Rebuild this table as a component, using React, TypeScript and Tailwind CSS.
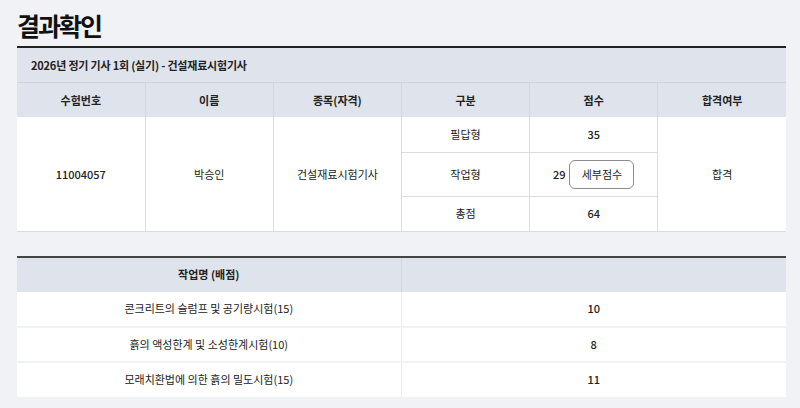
import React from "react";

const font = { fontFamily: '"Noto Sans CJK KR", "Noto Sans", sans-serif' };

export default function App() {
  const tasks = [
    { name: "콘크리트의 슬럼프 및 공기량시험(15)", score: "10" },
    { name: "흙의 액성한계 및 소성한계시험(10)", score: "8" },
    { name: "모래치환법에 의한 흙의 밀도시험(15)", score: "11" },
  ];
  const th = "border-r border-[#d3d7de] last:border-r-0 font-semibold text-center";
  return (
    <div className="w-[800px] h-[408px] bg-[#f1f2f6] text-[#222] overflow-hidden" style={font}>
      <div className="pl-[17px] pr-[14px] pt-[7px]">
        <h1 className="text-[25px] leading-[36px] font-bold text-[#111] mb-[3px] tracking-[-2px]">결과확인</h1>
        <table className="w-[769px] border-collapse table-fixed text-[11px]">
          <thead>
            <tr className="bg-[#dfe3eb] border-t-2 border-[#222]">
              <th colSpan={6} className="h-[35px] text-left pl-[14px] font-semibold border-b border-[#cfd3da] tracking-[-0.2px]">
                2026년 정기 기사 1회 (실기) - 건설재료시험기사
              </th>
            </tr>
            <tr className="bg-[#dfe3eb] h-[35px]">
              <th className={th + " w-[128px]"}>수험번호</th>
              <th className={th + " w-[128px]"}>이름</th>
              <th className={th + " w-[128px]"}>종목(자격)</th>
              <th className={th + " w-[128px]"}>구분</th>
              <th className={th + " w-[128px]"}>점수</th>
              <th className={th}>합격여부</th>
            </tr>
          </thead>
          <tbody className="bg-white">
            <tr className="h-[35px] border-b border-[#dcdcdc]">
              <td rowSpan={3} className="text-center border-r border-[#dcdcdc] font-medium">11004057</td>
              <td rowSpan={3} className="text-center border-r border-[#dcdcdc]">박승인</td>
              <td rowSpan={3} className="text-center border-r border-[#dcdcdc]">건설재료시험기사</td>
              <td className="text-center border-r border-[#dcdcdc]">필답형</td>
              <td className="text-center border-r border-[#dcdcdc] font-medium">35</td>
              <td rowSpan={3} className="text-center">합격</td>
            </tr>
            <tr className="h-[44px] border-b border-[#dcdcdc]">
              <td className="text-center border-r border-[#dcdcdc]">작업형</td>
              <td className="border-r border-[#dcdcdc]">
                <div className="flex items-center justify-center gap-[4px]">
                  <span className="font-medium">29</span>
                  <button className="w-[65px] h-[29px] rounded-[6px] border border-[#8a8a8a] bg-white text-[11px]" style={font}>
                    세부점수
                  </button>
                </div>
              </td>
            </tr>
            <tr className="h-[35px] border-b border-[#dcdcdc]">
              <td className="text-center border-r border-[#dcdcdc]">총점</td>
              <td className="text-center border-r border-[#dcdcdc] font-medium">64</td>
            </tr>
          </tbody>
        </table>

        <table className="w-[769px] border-collapse table-fixed text-[11px] mt-[24px]">
          <thead>
            <tr className="bg-[#dfe3eb] h-[35px] border-t-2 border-[#444]">
              <th className="w-[384px] font-semibold text-center border-r border-[#d3d7de]">작업명 (배점)</th>
              <th></th>
            </tr>
          </thead>
          <tbody>
            {tasks.map((t) => (
              <tr key={t.name} className="h-[35px] bg-white border-b-2 border-[#f1f2f6] last:border-b-0">
                <td className="text-center border-r border-[#ececef]">{t.name}</td>
                <td className="text-center font-medium">{t.score}</td>
              </tr>
            ))}
          </tbody>
        </table>
      </div>
    </div>
  );
}
